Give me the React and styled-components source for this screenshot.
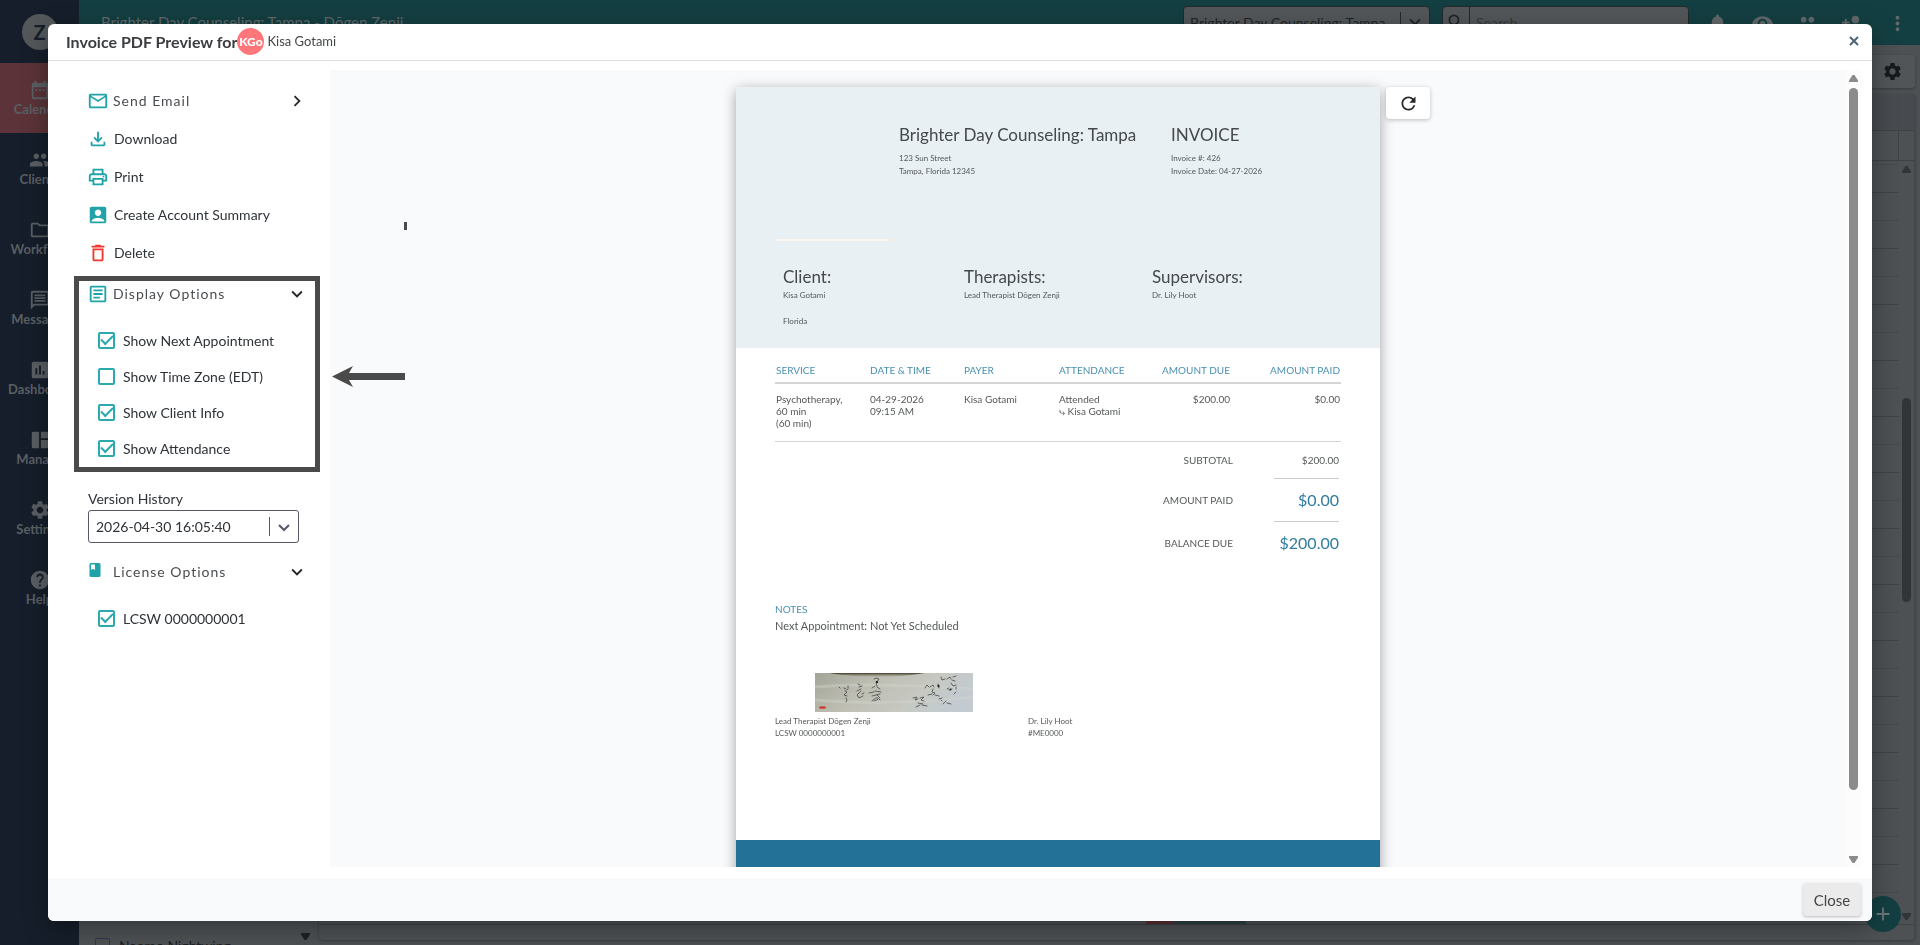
import React, { useState } from "react";
import styled, { createGlobalStyle } from "styled-components";
import {
  MdAccountBox,
  MdAdd,
  MdChevronRight,
  MdDateRange,
  MdDeleteOutline,
  MdExpandMore,
  MdHelp,
  MdInsertChart,
  MdMoreVert,
  MdNotifications,
  MdOutlineArticle,
  MdOutlineEmail,
  MdOutlineFileDownload,
  MdOutlineFolder,
  MdOutlineMessage,
  MdOutlinePrint,
  MdPeople,
  MdPersonAdd,
  MdRefresh,
  MdSearch,
  MdSettings,
  MdSpaceDashboard,
  MdVisibility,
} from "react-icons/md";

const GlobalStyle = createGlobalStyle`
  * {
    box-sizing: border-box;
  }

  body {
    margin: 0;
    overflow: hidden;
    font-family: Lato, "Open Sans", sans-serif;
    font-size: 14px;
    color: #2e3338;
  }

  button, input, select {
    font: inherit;
    color: inherit;
  }

  button {
    padding: 0;
    border: 0;
    background: none;
    cursor: pointer;
  }
`;

/* ---------- application behind the dialog ---------- */

const Shell = styled.div`
  display: flex;
  height: 100vh;
  overflow: hidden;
  background: #4d5154;
`;

const SideNav = styled.nav`
  flex: none;
  width: 79px;
  background: #151e2a;
  color: #5a5f64;
`;

const LogoBox = styled.div`
  display: flex;
  align-items: center;
  justify-content: center;
  height: 63px;
`;

const LogoCircle = styled.div`
  width: 36px;
  height: 36px;
  border-radius: 50%;
  background: #54585b;
  color: #151e2a;
  font-size: 20px;
  font-weight: 700;
  line-height: 36px;
  text-align: center;
`;

const NavLink = styled.a`
  display: flex;
  flex-direction: column;
  align-items: center;
  height: 70px;
  padding-top: 16px;
  background: ${({ $active }) => ($active ? "#5b3338" : "none")};
  color: inherit;
  font-size: 13px;
  font-weight: 700;
  line-height: 16px;
  text-decoration: none;

  svg {
    flex: none;
  }
`;

const Main = styled.div`
  display: flex;
  flex-direction: column;
  flex: 1;
  min-width: 0;
`;

const TopBar = styled.header`
  display: flex;
  flex: none;
  align-items: flex-start;
  height: 45px;
  padding: 6px 0 0 22px;
  background: #143f42;
  color: #62696b;
`;

const PracticeName = styled.div`
  flex: 1;
  font-size: 15px;
  line-height: 32px;
`;

const TopField = styled.div`
  display: flex;
  align-items: center;
  width: 247px;
  height: 32px;
  margin-right: ${({ $gap }) => $gap}px;
  border: 1px solid #23292c;
  border-radius: 4px;
  background: #53575a;
  color: #1f2426;

  select,
  input {
    flex: 1;
    min-width: 0;
    padding: 0 6px;
    border: 0;
    outline: 0;
    appearance: none;
    background: none;
  }

  input::placeholder {
    color: #34393b;
    opacity: 1;
  }

  svg {
    flex: none;
    margin: 0 3px;
  }
`;

const FieldRule = styled.span`
  width: 1px;
  height: ${({ $full }) => ($full ? "100%" : "20px")};
  background: #23292c;
`;

const TopIcon = styled.button`
  display: flex;
  align-items: center;
  justify-content: center;
  width: 45px;
  height: 34px;
`;

const Workspace = styled.div`
  display: flex;
  flex: 1;
  min-height: 0;
  gap: 6px;
  padding: 10px 5px 5px 0;
`;

const ClientList = styled.div`
  display: flex;
  align-items: flex-end;
  justify-content: space-between;
  width: 234px;
  padding: 0 3px 0 16px;
  color: #1f2123;
`;

/* the last client in the list runs past the bottom of the window */
const ClientOption = styled.label`
  display: flex;
  align-items: center;
  gap: 9px;
  height: 16px;
  margin-bottom: -13px;
  white-space: nowrap;

  input {
    width: 15px;
    height: 15px;
    margin: 0;
    border: 1px solid #34354f;
    border-radius: 2px;
    appearance: none;
  }
`;

const Calendar = styled.div`
  display: flex;
  flex: 1;
  flex-direction: column;
`;

const CalendarTools = styled.div`
  display: flex;
  justify-content: flex-end;
  margin-bottom: 6px;
`;

const GearButton = styled.button`
  display: flex;
  align-items: center;
  justify-content: center;
  width: 45px;
  height: 33px;
  border-radius: 4px;
  background: #515558;
  box-shadow: 0 1px 3px rgba(0, 0, 0, 0.3);
  color: #17191b;
`;

const CalendarCard = styled.div`
  display: flex;
  flex: 1;
  flex-direction: column;
  min-height: 0;
  border-right: 1px solid #44484a;
  border-radius: 4px;
  box-shadow: 0 1px 3px rgba(0, 0, 0, 0.3);
`;

const CalendarHead = styled.div`
  flex: none;
  height: 37px;
  border-bottom: 1px solid #3e4244;
  background: #474b50;
`;

const AllDayRow = styled.div`
  display: flex;
  flex: none;
  justify-content: flex-end;
  height: 30px;
  padding-right: 15px;
  border-bottom: 1px solid #3e4244;

  span {
    width: 1px;
    background: #3e4244;
  }
`;

const SlotArea = styled.div`
  display: flex;
  flex: 1;
  min-height: 0;
  overflow: hidden;
`;

const Slots = styled.div`
  flex: 1;
`;

const Slot = styled.div`
  height: ${({ $partial }) => ($partial ? 4 : 28)}px;
  border-bottom: 1px ${({ $half }) => ($half ? "dotted" : "solid")} #404446;
`;

const SlotEvent = styled.div`
  width: 100px;
  height: 28px;
  margin-left: calc(52% + 5px);
  border-left: 28px solid #5a2d31;
  background: #2f4147;
`;

const CalendarFoot = styled.div`
  flex: none;
  height: 16px;
  border-top: 1px solid #3e4244;
`;

const AddButton = styled.button`
  position: fixed;
  right: 19px;
  bottom: 13px;
  display: flex;
  align-items: center;
  justify-content: center;
  width: 36px;
  height: 36px;
  border-radius: 50%;
  background: #143f42;
  color: #6c7577;
`;

/* ---------- scrollbar column, shared by calendar and preview ---------- */

const ScrollColumn = styled.div`
  display: flex;
  flex: none;
  flex-direction: column;
  align-items: center;
  gap: 5px;
  width: 15px;
  padding: 5px 0 4px;
  background: ${({ $dark }) => ($dark ? "none" : "#fcfcfc")};
  color: ${({ $dark }) => ($dark ? "#313537" : "#8b8b8b")};
`;

const ScrollTrack = styled.div`
  flex: 1;
  width: 9px;
  padding-top: ${({ $offset }) => $offset}px;
`;

const ScrollThumb = styled.div`
  height: ${({ $size }) => $size}%;
  border-radius: 5px;
  background: currentColor;
`;

function Arrow({ down }) {
  return (
    <svg width="9" height="7" viewBox="0 0 9 7" fill="currentColor">
      <path d={down ? "M0 0h9v1.5L5.5 7h-2L0 1.5z" : "M0 7h9V5.5L5.5 0h-2L0 5.5z"} />
    </svg>
  );
}

function Scrollbar({ dark, offset, size }) {
  return (
    <ScrollColumn $dark={dark} aria-hidden="true">
      <Arrow />
      <ScrollTrack $offset={offset}>
        <ScrollThumb $size={size} />
      </ScrollTrack>
      <Arrow down />
    </ScrollColumn>
  );
}

/* ---------- dialog ---------- */

const Overlay = styled.div`
  position: fixed;
  inset: 0;
  padding: 24px 48px;
`;

const Dialog = styled.section`
  display: flex;
  flex-direction: column;
  height: 100%;
  overflow: hidden;
  border-radius: 6px;
  background: #fff;
  box-shadow: 0 6px 24px rgba(0, 0, 0, 0.35);
`;

const DialogHeader = styled.header`
  display: flex;
  flex: none;
  align-items: center;
  height: 37px;
  padding: 0 12px 2px 18px;
  border-bottom: 1px solid #dcdddf;
`;

const DialogTitle = styled.h1`
  margin: 0;
  color: #3b3d40;
  font-size: 16px;
  font-weight: 700;
`;

const Avatar = styled.span`
  width: 27px;
  height: 27px;
  margin-right: 3px;
  border-radius: 50%;
  background: #ff767b;
  color: #fff;
  font-size: 12px;
  font-weight: 900;
  line-height: 27px;
  text-align: center;
`;

const ClientName = styled.span`
  flex: 1;
  color: #44474a;
  font-size: 13px;
`;

const DialogClose = styled.button`
  display: flex;
  color: #4f6475;
`;

const DialogBody = styled.div`
  display: flex;
  flex: 1;
  min-height: 0;
  padding: 9px 11px 11px 0;
`;

const Options = styled.aside`
  flex: none;
  width: 282px;
  padding: 12px 10px 0 26px;
`;

const MenuButton = styled.button`
  display: flex;
  align-items: center;
  gap: ${({ $spaced }) => ($spaced ? 4 : 5)}px;
  width: 100%;
  height: ${({ $section }) => ($section ? 26 : 38)}px;
  padding: 0 12px 0 13px;
  color: ${({ $spaced }) => ($spaced ? "#4a4d50" : "#2e3338")};
  letter-spacing: ${({ $spaced }) => ($spaced ? "1px" : "normal")};
  text-align: left;

  span {
    flex: 1;
    padding-bottom: 2px;
  }

  svg {
    flex: none;
    color: ${({ $danger }) => ($danger ? "#f0372b" : "#1fa3a8")};
  }

  span + svg {
    color: #26292c;
  }
`;

const DisplaySection = styled.div`
  margin-top: 4px;
  border: 5px solid #4a4a4a;
  padding-bottom: 1px;

  /* keeps the heading in line with the rows outside the frame */
  ${MenuButton} {
    padding: 0 7px 0 8px;
  }
`;

const CheckGroup = styled.div`
  padding-top: 15px;
  padding-left: ${({ $framed }) => ($framed ? 19 : 24)}px;
`;

const CheckLabel = styled.label`
  display: flex;
  align-items: center;
  gap: 8px;
  height: 36px;
  cursor: pointer;

  input {
    display: grid;
    flex: none;
    place-items: center;
    width: 17px;
    height: 17px;
    margin: 0;
    border: 2px solid #2ba9ae;
    border-radius: 2px;
    appearance: none;
  }

  input:checked::after {
    content: "";
    width: 10px;
    height: 5px;
    margin-bottom: 3px;
    border: solid #2ba9ae;
    border-width: 0 0 2px 2px;
    transform: rotate(-45deg);
  }
`;

const VersionField = styled.div`
  margin: 17px 21px 16px 14px;

  label {
    display: block;
    height: 21px;
    line-height: 20px;
  }
`;

const VersionBox = styled.div`
  display: flex;
  align-items: center;
  height: 33px;
  padding: 0 4px 0 7px;
  border: 1px solid #555866;
  border-radius: 3px;

  select {
    flex: 1;
    min-width: 0;
    padding: 0;
    border: 0;
    outline: 0;
    appearance: none;
    background: none;
  }

  span {
    width: 1px;
    height: 19px;
    margin-right: 4px;
    background: #555866;
  }
`;

const Preview = styled.div`
  position: relative;
  display: flex;
  flex: 1;
  overflow: hidden;
  background: #f9fafc;
`;

const PreviewCanvas = styled.div`
  display: flex;
  flex: 1;
  align-items: flex-start;
  justify-content: center;
  gap: 6px;
  padding: 17px 10px 0 0;
`;

const RefreshButton = styled.button`
  display: flex;
  align-items: center;
  justify-content: center;
  width: 44px;
  height: 32px;
  border-radius: 4px;
  background: #fff;
  box-shadow: 0 1px 4px rgba(0, 0, 0, 0.25);
  color: #26292c;
`;

const PointerArrow = styled.svg`
  position: absolute;
  top: 296px;
  left: 2px;
`;

const PointerMark = styled.i`
  position: absolute;
  top: 152px;
  left: 74px;
  width: 3px;
  height: 8px;
  background: #4a4a4a;
`;

const DialogFooter = styled.footer`
  display: flex;
  flex: none;
  align-items: center;
  justify-content: flex-end;
  height: 43px;
  padding: 0 11px;
  background: #f9fafc;
`;

const CloseButton = styled.button`
  width: 58px;
  height: 33px;
  border-radius: 4px;
  background: #ebebeb;
  box-shadow: 0 1px 3px rgba(0, 0, 0, 0.25);
  color: #44474a;
  font-size: 15px;
`;

/* ---------- invoice ---------- */

const Paper = styled.article`
  flex: none;
  width: 644px;
  border-radius: 4px 4px 0 0;
  background: #fff;
  box-shadow: 0 3px 14px rgba(0, 0, 0, 0.35);
  color: #55585a;
  font-size: 10px;
  line-height: 12px;
`;

const PaperHead = styled.div`
  padding: 36px 39px 20px;
  border-radius: 4px 4px 0 0;
  background: #e8f0f3;
`;

const Letterhead = styled.div`
  display: grid;
  grid-template-columns: 124px 272px 1fr;
  height: 116px;
`;

const Parties = styled.div`
  display: grid;
  grid-template-columns: 181px 188px 1fr;
  padding: 24px 0 0 8px;
`;

const PaperTitle = styled.h2`
  margin: 0 0 ${({ $gap }) => $gap || 0}px;
  color: #46494b;
  font-size: 17px;
  font-weight: 400;
  line-height: 24px;
  white-space: nowrap;
`;

const Small = styled.p`
  margin: 0;
  min-height: 13px;
  font-size: 8px;
  line-height: 13px;
`;

const HeadRule = styled.div`
  width: 114px;
  height: 2px;
  background: #fbf5ee;
`;

const PaperBody = styled.div`
  padding: 14px 39px 0;
`;

const LineItems = styled.table`
  width: 100%;
  border-collapse: separate;
  border-spacing: 0;
  table-layout: fixed;

  th {
    height: 22px;
    padding: 0 1px 4px;
    border-bottom: 2px solid #d3d4d5;
    color: #4a90b0;
    font-weight: 400;
    text-align: left;
    white-space: nowrap;
  }

  td {
    padding: 9px 1px 12px;
    border-bottom: 1px solid #d3d4d5;
    vertical-align: top;
  }

  th:nth-child(n + 5),
  td:nth-child(n + 5) {
    text-align: right;
  }
`;

const Totals = styled.dl`
  margin: 0 2px 0 0;
`;

const TotalRow = styled.div`
  display: flex;
  justify-content: flex-end;
  gap: 41px;
  line-height: ${({ $short }) => ($short ? 36 : 42)}px;

  dd {
    width: 65px;
    margin: 0;
    border-bottom: ${({ $last }) => ($last ? "0" : "1px solid #c9cacb")};
    color: ${({ $short }) => ($short ? "inherit" : "#2f7c9f")};
    font-size: ${({ $short }) => ($short ? 10 : 16)}px;
    text-align: right;
  }
`;

const Notes = styled.div`
  margin: 38px 0 40px;
  font-size: 11px;
  line-height: 14px;

  h3 {
    margin: 0 0 3px;
    color: #4a90b0;
    font-size: 10px;
    font-weight: 400;
  }

  p {
    margin: 0;
  }
`;

const Signatures = styled.div`
  display: grid;
  grid-template-columns: 253px 1fr;
  align-items: end;
  padding-bottom: 101px;

  svg {
    display: block;
    margin: 0 0 3px 40px;
  }

  p {
    margin: 0;
    font-size: 8px;
    line-height: 12px;
  }
`;

const PaperFoot = styled.div`
  height: 60px;
  background: #237197;
`;

const navItems = [
  { label: "Calendar", Icon: MdDateRange, active: true },
  { label: "Clients", Icon: MdPeople },
  { label: "Workflow", Icon: MdOutlineFolder },
  { label: "Messages", Icon: MdOutlineMessage },
  { label: "Dashboard", Icon: MdInsertChart },
  { label: "Manage", Icon: MdSpaceDashboard },
  { label: "Settings", Icon: MdSettings },
  { label: "Help", Icon: MdHelp },
];

const topIcons = [
  { label: "Notifications", Icon: MdNotifications },
  { label: "Visibility", Icon: MdVisibility },
  { label: "Groups", Icon: MdPeople },
  { label: "Add client", Icon: MdPersonAdd },
  { label: "More", Icon: MdMoreVert },
];

const actions = [
  { label: "Send Email", Icon: MdOutlineEmail, expandable: true },
  { label: "Download", Icon: MdOutlineFileDownload },
  { label: "Print", Icon: MdOutlinePrint },
  { label: "Create Account Summary", Icon: MdAccountBox },
  { label: "Delete", Icon: MdDeleteOutline, danger: true },
];

const displayOptions = [
  { id: "appointment", label: "Show Next Appointment" },
  { id: "timezone", label: "Show Time Zone (EDT)" },
  { id: "client", label: "Show Client Info" },
  { id: "attendance", label: "Show Attendance" },
];

const slots = Array.from({ length: 28 }, (_, i) => i);

function CrossIcon() {
  return (
    <svg width="12" height="12" viewBox="0 0 12 12" stroke="currentColor" strokeWidth="2">
      <path d="M2 2l8 8M10 2l-8 8" />
    </svg>
  );
}

function SelectChevron() {
  return (
    <svg width="20" height="20" viewBox="0 0 20 20" fill="none" stroke="#555866" strokeWidth="2">
      <path d="M5 8l5 5 5-5" />
    </svg>
  );
}

function LicenseIcon() {
  return (
    <svg width="22" height="22" viewBox="0 0 22 22" fill="currentColor">
      <path
        fillRule="evenodd"
        d="M4 2h8a1.5 1.5 0 0 1 1.5 1.5v11A1.5 1.5 0 0 1 12 16H4a1.5 1.5 0 0 1-1.5-1.5v-11A1.5 1.5 0 0 1 4 2zM4 3.5V9l2-1.2L8 9V3.5z"
      />
    </svg>
  );
}

function Signature() {
  return (
    <svg width="158" height="39" viewBox="0 0 158 39" role="img" aria-label="Signature">
      <defs>
        <linearGradient id="sheet" x1="0" y1="0" x2="1" y2="0.3">
          <stop offset="0" stopColor="#a3a498" />
          <stop offset="0.4" stopColor="#bebeb3" />
          <stop offset="0.75" stopColor="#c6c8c1" />
          <stop offset="1" stopColor="#c3cbd0" />
        </linearGradient>
        <linearGradient id="edge" x1="0" y1="0" x2="0" y2="1">
          <stop offset="0" stopColor="#3f3625" />
          <stop offset="1" stopColor="#8f8a78" stopOpacity="0.1" />
        </linearGradient>
      </defs>
      <rect width="158" height="39" fill="url(#sheet)" />
      <path d="M14 0h96q-22 4-48 4Q30 3 14 0z" fill="url(#edge)" />
      <path
        d="M0 14q50-5 158 2M0 27q70 6 158-3"
        stroke="#d3d4cc"
        strokeWidth="3"
        fill="none"
        opacity="0.4"
      />
      <g fill="none" stroke="#2f3233" strokeWidth="0.8" strokeLinecap="round" opacity="0.85">
        <path d="M24 14l1 1M29 15l2 1M33 13v2M30 18l2 1-3 3 3 1M32 17l1-1M31 25l1 2-1 2" />
        <path d="M43 11l2 1M44 14l3-1M42 18l4-2M46 18l-4 4 2 3 4-2M47 21l2-1" />
        <path d="M59 6q3-2 5 0l-2 3M61 9l1 4M57 15l3-2M62 14l3 2" />
        <path d="M54 20l5-1M60 18l6 1M57 23l8-2M62 22l3 3M57 28q4-4 6-3t-4 3M64 26l1 1" />
        <path d="M126 4l1 3 3-1M132 6l3-2 1 2M138 4l3-1M137 7l3 1M136 10l2 3 3-1" />
        <path d="M132 16l2-1M134 17l3-1M141 14v2M141 19l-2 2" />
        <path d="M110 15l2-3 2 2M115 14l3-2 1 2M123 11l1 4M118 16l-1 3 3 1-2 2M113 22l4-1M120 22l4 1" />
        <path d="M124 26l3-1M126 27l1 1M128 31l3-3M132 30l4 1" />
        <path d="M98 25l4-1-2 3 3-1M105 25l4-1-3 3 3 1M103 30l5 1M101 34l4-2M107 32l5 1" />
      </g>
      <path d="M62 8v2M123 12l1 2M135 16l1 1" stroke="#26292a" strokeWidth="2" />
      <ellipse cx="7.5" cy="34.5" rx="3.5" ry="1.3" fill="#cf3a31" />
    </svg>
  );
}

function AppBackground() {
  return (
    <Shell>
      <SideNav>
        <LogoBox>
          <LogoCircle>Z</LogoCircle>
        </LogoBox>
        {navItems.map(({ label, Icon, active }) => (
          <NavLink key={label} href="#" $active={active}>
            <Icon size={22} />
            {label}
          </NavLink>
        ))}
      </SideNav>
      <Main>
        <TopBar>
          <PracticeName>Brighter Day Counseling: Tampa - Dōgen Zenji</PracticeName>
          <TopField $gap={12}>
            <select aria-label="Practice">
              <option>Brighter Day Counseling: Tampa</option>
            </select>
            <FieldRule />
            <MdExpandMore size={22} />
          </TopField>
          <TopField $gap={6}>
            <MdSearch size={20} />
            <FieldRule $full />
            <input type="search" aria-label="Search" placeholder="Search" />
          </TopField>
          {topIcons.map(({ label, Icon }) => (
            <TopIcon key={label} aria-label={label}>
              <Icon size={23} />
            </TopIcon>
          ))}
        </TopBar>
        <Workspace>
          <ClientList>
            <ClientOption>
              <input type="checkbox" />
              Naomo Nightwing
            </ClientOption>
            <Arrow down />
          </ClientList>
          <Calendar>
            <CalendarTools>
              <GearButton aria-label="Calendar settings">
                <MdSettings size={21} />
              </GearButton>
            </CalendarTools>
            <CalendarCard>
              <CalendarHead />
              <AllDayRow>
                <span />
              </AllDayRow>
              <SlotArea>
                <Slots>
                  {slots.map((i) => (
                    <Slot key={i} $partial={i === 0} $half={i % 2 === 0} />
                  ))}
                  <SlotEvent />
                </Slots>
                <Scrollbar dark offset={220} size={40} />
              </SlotArea>
              <CalendarFoot />
            </CalendarCard>
          </Calendar>
        </Workspace>
        <AddButton aria-label="Add">
          <MdAdd size={22} />
        </AddButton>
      </Main>
    </Shell>
  );
}

function Invoice() {
  return (
    <Paper>
      <PaperHead>
        <Letterhead>
          <span />
          <div>
            <PaperTitle $gap={5}>Brighter Day Counseling: Tampa</PaperTitle>
            <Small>123 Sun Street</Small>
            <Small>Tampa, Florida 12345</Small>
          </div>
          <div>
            <PaperTitle $gap={5}>INVOICE</PaperTitle>
            <Small>Invoice #: 426</Small>
            <Small>Invoice Date: 04-27-2026</Small>
          </div>
        </Letterhead>
        <HeadRule />
        <Parties>
          <div>
            <PaperTitle>Client:</PaperTitle>
            <Small>Kisa Gotami</Small>
            <Small />
            <Small>Florida</Small>
          </div>
          <div>
            <PaperTitle>Therapists:</PaperTitle>
            <Small>Lead Therapist Dōgen Zenji</Small>
          </div>
          <div>
            <PaperTitle>Supervisors:</PaperTitle>
            <Small>Dr. Lily Hoot</Small>
          </div>
        </Parties>
      </PaperHead>
      <PaperBody>
        <LineItems>
          <colgroup>
            <col width="94" />
            <col width="94" />
            <col width="95" />
            <col width="94" />
            <col width="79" />
            <col />
          </colgroup>
          <thead>
            <tr>
              <th>SERVICE</th>
              <th>DATE &amp; TIME</th>
              <th>PAYER</th>
              <th>ATTENDANCE</th>
              <th>AMOUNT DUE</th>
              <th>AMOUNT PAID</th>
            </tr>
          </thead>
          <tbody>
            <tr>
              <td>
                Psychotherapy,
                <br />
                60 min
                <br />
                (60 min)
              </td>
              <td>
                04-29-2026
                <br />
                09:15 AM
              </td>
              <td>Kisa Gotami</td>
              <td>
                Attended
                <br />⤷ Kisa Gotami
              </td>
              <td>$200.00</td>
              <td>$0.00</td>
            </tr>
          </tbody>
        </LineItems>
        <Totals>
          <TotalRow $short>
            <dt>SUBTOTAL</dt>
            <dd>$200.00</dd>
          </TotalRow>
          <TotalRow>
            <dt>AMOUNT PAID</dt>
            <dd>$0.00</dd>
          </TotalRow>
          <TotalRow $last>
            <dt>BALANCE DUE</dt>
            <dd>$200.00</dd>
          </TotalRow>
        </Totals>
        <Notes>
          <h3>NOTES</h3>
          <p>Next Appointment: Not Yet Scheduled</p>
        </Notes>
        <Signatures>
          <div>
            <Signature />
            <p>Lead Therapist Dōgen Zenji</p>
            <p>LCSW 0000000001</p>
          </div>
          <div>
            <p>Dr. Lily Hoot</p>
            <p>#ME0000</p>
          </div>
        </Signatures>
      </PaperBody>
      <PaperFoot />
    </Paper>
  );
}

function App() {
  const [checked, setChecked] = useState(["appointment", "client", "attendance", "license"]);

  const toggle = (id) =>
    setChecked((prev) =>
      prev.includes(id) ? prev.filter((item) => item !== id) : [...prev, id]
    );

  return (
    <>
      <GlobalStyle />
      <AppBackground />
      <Overlay>
        <Dialog role="dialog" aria-labelledby="preview-title">
          <DialogHeader>
            <DialogTitle id="preview-title">Invoice PDF Preview for</DialogTitle>
            <Avatar>KGo</Avatar>
            <ClientName>Kisa Gotami</ClientName>
            <DialogClose aria-label="Close preview">
              <CrossIcon />
            </DialogClose>
          </DialogHeader>
          <DialogBody>
            <Options>
              {actions.map(({ label, Icon, expandable, danger }) => (
                <MenuButton key={label} $spaced={expandable} $danger={danger}>
                  <Icon size={22} />
                  <span>{label}</span>
                  {expandable && <MdChevronRight size={22} />}
                </MenuButton>
              ))}
              <DisplaySection>
                <MenuButton $section $spaced>
                  <MdOutlineArticle size={22} />
                  <span>Display Options</span>
                  <MdExpandMore size={22} />
                </MenuButton>
                <CheckGroup $framed>
                  {displayOptions.map(({ id, label }) => (
                    <CheckLabel key={id}>
                      <input
                        type="checkbox"
                        checked={checked.includes(id)}
                        onChange={() => toggle(id)}
                      />
                      {label}
                    </CheckLabel>
                  ))}
                </CheckGroup>
              </DisplaySection>
              <VersionField>
                <label htmlFor="version">Version History</label>
                <VersionBox>
                  <select id="version">
                    <option>2026-04-30 16:05:40</option>
                  </select>
                  <span />
                  <SelectChevron />
                </VersionBox>
              </VersionField>
              <MenuButton $section $spaced>
                <LicenseIcon />
                <span>License Options</span>
                <MdExpandMore size={22} />
              </MenuButton>
              <CheckGroup>
                <CheckLabel>
                  <input
                    type="checkbox"
                    checked={checked.includes("license")}
                    onChange={() => toggle("license")}
                  />
                  LCSW 0000000001
                </CheckLabel>
              </CheckGroup>
            </Options>
            <Preview>
              <PreviewCanvas>
                <Invoice />
                <RefreshButton aria-label="Refresh">
                  <MdRefresh size={21} />
                </RefreshButton>
              </PreviewCanvas>
              <Scrollbar offset={1} size={92} />
              <PointerMark />
              <PointerArrow width="73" height="21" viewBox="0 0 73 21" fill="#4a4a4a">
                <path d="M0 10.5L21 0l-4 7h56v7H17l4 7z" />
              </PointerArrow>
            </Preview>
          </DialogBody>
          <DialogFooter>
            <CloseButton>Close</CloseButton>
          </DialogFooter>
        </Dialog>
      </Overlay>
    </>
  );
}

export default App;
